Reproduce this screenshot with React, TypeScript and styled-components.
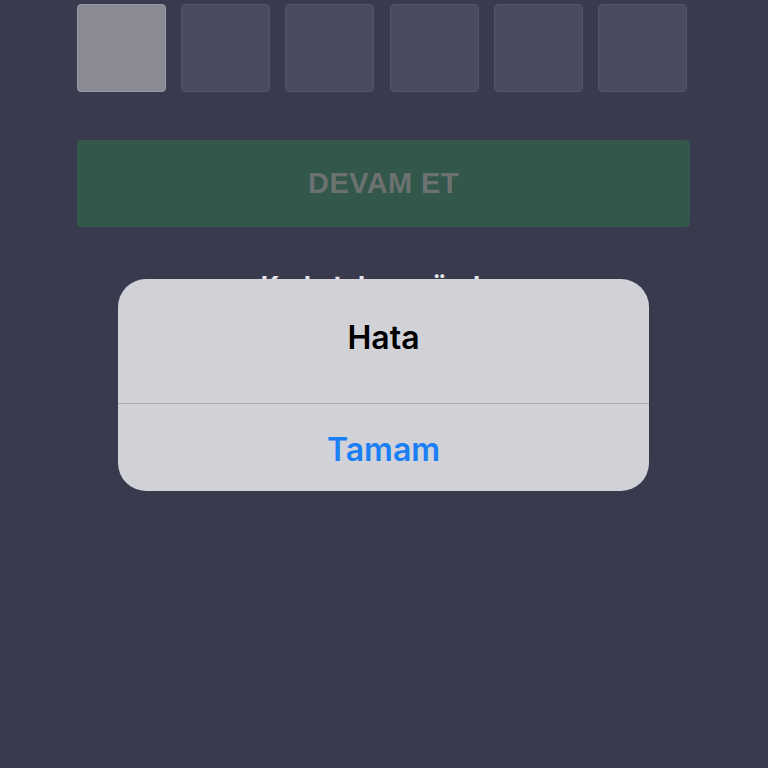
import React from 'react';
import styled, { createGlobalStyle } from 'styled-components';

const GlobalStyle = createGlobalStyle`
  html, body {
    margin: 0;
    padding: 0;
    background: #3a3a4f;
    font-family: "Inter", "Liberation Sans", sans-serif;
  }
`;

const Screen = styled.div`
  position: relative;
  width: 768px;
  height: 768px;
  overflow: hidden;
  background: #3a3a4f;
`;

const Content = styled.div`
  display: flex;
  flex-direction: column;
  padding: 4px 78px 0 77px;
`;

const CodeRow = styled.div`
  display: flex;
  gap: 15.2px;
`;

const CodeBox = styled.div<{ active?: boolean }>`
  width: 89px;
  height: 88px;
  box-sizing: border-box;
  border-radius: 4px;
  background: ${p => (p.active ? '#8a8a95' : '#4a4a5e')};
  border: 1px solid ${p => (p.active ? '#9a9aa4' : '#53536a')};
`;

const ContinueButton = styled.div`
  margin-top: 48px;
  height: 87px;
  border-radius: 4px;
  background: #33574b;
  display: flex;
  align-items: center;
  justify-content: center;
  color: #6c7270;
  font-family: "Liberation Sans", Arial, sans-serif;
  font-size: 29px;
  font-weight: 700;
  letter-spacing: 0.4px;
`;

const ResendText = styled.div`
  margin-top: 43px;
  text-align: center;
  color: #e6e6ea;
  font-size: 26px;
  font-weight: 700;
`;

const Alert = styled.div`
  position: absolute;
  left: 118px;
  top: 279px;
  width: 531px;
  height: 212px;
  border-radius: 28px;
  background: #d1d2d8;
  display: flex;
  flex-direction: column;
  overflow: hidden;
`;

const AlertTitle = styled.div`
  height: 125px;
  display: flex;
  align-items: center;
  justify-content: center;
  padding-bottom: 8px;
  box-sizing: border-box;
  color: #000;
  font-size: 32px;
  font-weight: 600;
  border-bottom: 1px solid #a9aab0;
`;

const AlertAction = styled.div`
  flex: 1;
  display: flex;
  align-items: center;
  justify-content: center;
  padding-top: 4px;
  color: #1a7ef5;
  font-size: 32px;
  font-weight: 600;
`;

export default function App() {
  return (
    <>
      <GlobalStyle />
      <Screen>
        <Content>
          <CodeRow>
            {[0, 1, 2, 3, 4, 5].map(i => (
              <CodeBox key={i} active={i === 0} />
            ))}
          </CodeRow>
          <ContinueButton>DEVAM ET</ContinueButton>
          <ResendText>Kodu tekrar gönder</ResendText>
        </Content>
        <Alert>
          <AlertTitle>Hata</AlertTitle>
          <AlertAction>Tamam</AlertAction>
        </Alert>
      </Screen>
    </>
  );
}
